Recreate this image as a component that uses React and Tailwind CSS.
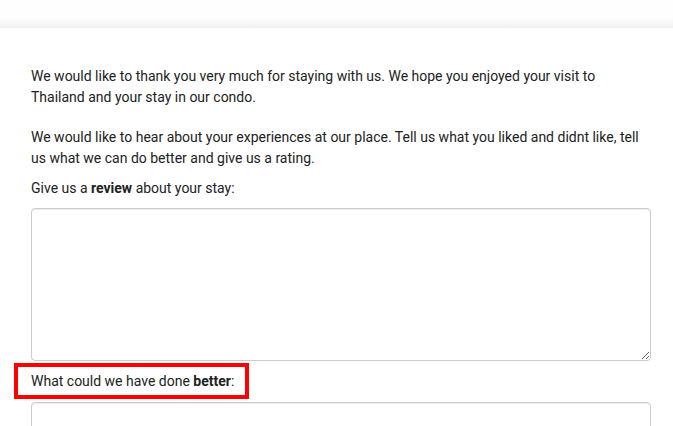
export default function App() {
  return (
    <div className="min-h-[426px] w-full bg-white" style={{ fontFamily: 'Roboto, "Liberation Sans", sans-serif' }}>
      <div className="h-[28px] w-full bg-gradient-to-b from-[#fefefe] from-60% to-[#f3f3f3] border-b border-[#f0f0f0]" />
      <div className="pl-[31px] pr-[22px] pt-[38px] text-[14px] leading-[21px] text-[#222]">
        <p>
          We would like to thank you very much for staying with us. We hope you enjoyed your visit to Thailand and your stay in our condo.
        </p>
        <p className="mt-[19px]">
          We would like to hear about your experiences at our place. Tell us what you liked and didnt like, tell us what we can do better and give us a rating.
        </p>
        <p className="mt-[9px]">
          Give us a <b className="font-bold">review</b> about your stay:
        </p>
        <textarea className="mt-[9px] block h-[153px] w-[620px] rounded-[4px] border border-[#cccccc] bg-white shadow-[inset_0_1px_1px_rgba(0,0,0,0.075)] outline-none" />
        <div className="mt-[10px]">
          <span className="relative inline-block">
            What could we have done <b className="font-bold">better</b>:
            <span className="pointer-events-none absolute left-[-17px] right-[-15px] top-[-8px] bottom-[-7px] border-4 border-[#ff0000]" />
          </span>
        </div>
        <textarea className="mt-[10px] block h-[153px] w-[620px] rounded-[4px] border border-[#cccccc] bg-white shadow-[inset_0_1px_1px_rgba(0,0,0,0.075)] outline-none" />
      </div>
    </div>
  );
}
